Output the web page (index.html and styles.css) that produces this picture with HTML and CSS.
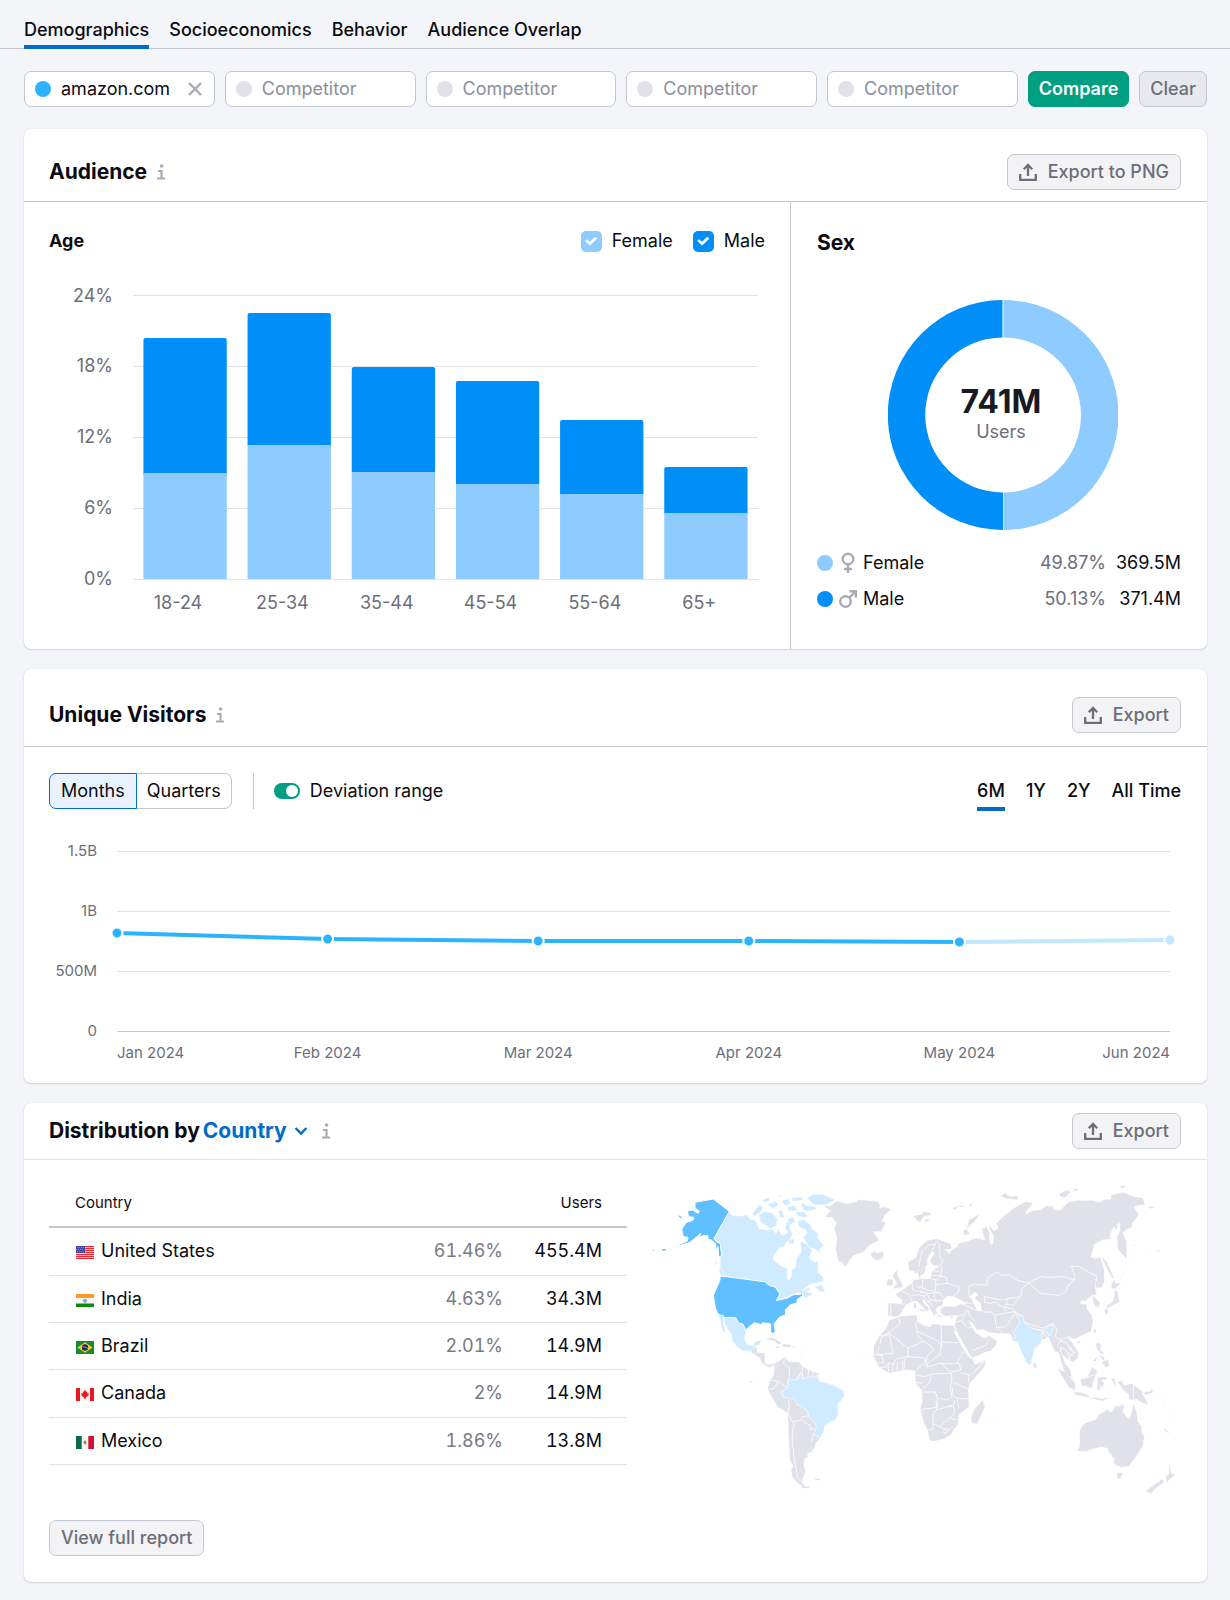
FILE: index.html
```html
<!DOCTYPE html>
<html lang="en">
<head>
<meta charset="utf-8">
<meta name="viewport" content="width=device-width, initial-scale=1">
<title>Demographics</title>
<link rel="stylesheet" href="styles.css">
</head>
<body>
<svg class="defs" width="0" height="0" aria-hidden="true">
  <symbol id="info" viewBox="0 0 8 16"><circle cx="4.600" cy="2" r="1.800"/><path d="M1 6h4.600v7.400H8V15.400H0V13.400h3.400V8H1z"/></symbol>
  <symbol id="export" viewBox="0 0 18 18"><path d="M1.200 11v5.800h15.600v-5.800M9 13V2.500M4.800 6.200 9 2 13.200 6.200" fill="none" stroke="currentColor" stroke-width="2.300"/></symbol>
</svg>
<nav class="tabs" aria-label="Sections">
  <a class="tab tab-active" href="#demographics">Demographics</a>
  <a class="tab" href="#socioeconomics">Socioeconomics</a>
  <a class="tab" href="#behavior">Behavior</a>
  <a class="tab" href="#overlap">Audience Overlap</a>
</nav>
<main class="page">
  <form class="compare">
    <div class="field"><span class="dot dot-own"></span><input type="text" aria-label="Domain" value="amazon.com"><button class="remove" type="button" aria-label="Remove"><svg width="14" height="14" viewBox="0 0 14 14"><path d="M1 1l12 12M13 1L1 13" stroke="currentColor" stroke-width="2.400"/></svg></button></div>
    <div class="field"><span class="dot"></span><input type="text" aria-label="Competitor 1" placeholder="Competitor"></div>
    <div class="field"><span class="dot"></span><input type="text" aria-label="Competitor 2" placeholder="Competitor"></div>
    <div class="field"><span class="dot"></span><input type="text" aria-label="Competitor 3" placeholder="Competitor"></div>
    <div class="field"><span class="dot"></span><input type="text" aria-label="Competitor 4" placeholder="Competitor"></div>
    <button class="btn btn-primary" type="button">Compare</button>
    <button class="btn btn-clear" type="button">Clear</button>
  </form>

  <section class="card">
    <header class="card-head">
      <h2>Audience</h2><svg class="info"><use href="#info"/></svg>
      <button class="btn btn-export" type="button"><svg width="18" height="18"><use href="#export"/></svg>Export to PNG</button>
    </header>
    <div class="audience">
      <div class="age">
        <div class="age-head">
          <h3>Age</h3>
          <label class="check"><input class="box box-female" type="checkbox" checked>Female</label>
          <label class="check"><input class="box box-male" type="checkbox" checked>Male</label>
        </div>
        <svg class="bars" role="img" aria-label="Age distribution">
          <g class="grid"><line x2="100%" y1="1" y2="1"/><line x2="100%" y1="72" y2="72"/><line x2="100%" y1="143" y2="143"/><line x2="100%" y1="214" y2="214"/><line x2="100%" y1="285" y2="285"/></g>
          <g class="axis" text-anchor="end"><text x="-20" y="8">24%</text><text x="-20" y="78">18%</text><text x="-20" y="149">12%</text><text x="-20" y="220">6%</text><text x="-20" y="291">0%</text></g>
          <g class="male"><rect x="1.67%" y="44" width="13.33%" height="138" rx="2"/><rect x="18.33%" y="19" width="13.33%" height="134" rx="2"/><rect x="35%" y="73" width="13.33%" height="107" rx="2"/><rect x="51.67%" y="87" width="13.33%" height="105" rx="2"/><rect x="68.33%" y="126" width="13.33%" height="76" rx="2"/><rect x="85%" y="173" width="13.33%" height="48" rx="2"/></g>
          <g class="female"><rect x="1.67%" y="179" width="13.33%" height="106"/><rect x="18.33%" y="151" width="13.33%" height="134"/><rect x="35%" y="178" width="13.33%" height="107"/><rect x="51.67%" y="190" width="13.33%" height="95"/><rect x="68.33%" y="200" width="13.33%" height="85"/><rect x="85%" y="219" width="13.33%" height="66"/></g>
          <g class="axis" text-anchor="middle"><text x="7.2%" y="315">18-24</text><text x="23.9%" y="315">25-34</text><text x="40.6%" y="315">35-44</text><text x="57.2%" y="315">45-54</text><text x="73.9%" y="315">55-64</text><text x="90.6%" y="315">65+</text></g>
        </svg>
      </div>
      <div class="sex">
        <h3 class="wide">Sex</h3>
        <svg class="donut" viewBox="0 0 230 230" role="img" aria-label="Users by sex">
          <path class="female" d="M115.500 0A115 115 0 0 1 115.500 230V192.500A77.500 77.500 0 0 0 115.500 37.500Z"/>
          <path class="male" d="M114.500 0A115 115 0 0 0 115 230V192.500A77.500 77.500 0 0 1 114.500 37.500Z"/>
          <text class="total" x="113" y="113">741M</text>
          <text class="axis" x="113" y="138" text-anchor="middle">Users</text>
        </svg>
        <ul class="legend">
          <li><span class="dot dot-female"></span><svg class="sign" viewBox="0 0 18 22"><g fill="none" stroke="currentColor" stroke-width="2.400"><circle cx="9" cy="7" r="5.300"/><path d="M9 12.500V21M5 17h8"/></g></svg><span class="name">Female</span><span class="share">49.87%</span><span class="count">369.5M</span></li>
          <li><span class="dot dot-male"></span><svg class="sign" viewBox="0 0 18 22"><g fill="none" stroke="currentColor" stroke-width="2.400"><circle cx="6.500" cy="13.500" r="5.300"/><path d="M10.300 9.700L16 4M10.500 3.200H16.800V9.500"/></g></svg><span class="name">Male</span><span class="share">50.13%</span><span class="count">371.4M</span></li>
        </ul>
      </div>
    </div>
  </section>

  <section class="card">
    <header class="card-head card-head-tall">
      <h2>Unique Visitors</h2><svg class="info"><use href="#info"/></svg>
      <button class="btn btn-export" type="button"><svg width="18" height="18"><use href="#export"/></svg>Export</button>
    </header>
    <div class="controls">
      <div class="segment"><button class="seg seg-on" type="button">Months</button><button class="seg" type="button">Quarters</button></div>
      <span class="rule"></span>
      <label class="toggle"><input class="switch" type="checkbox" checked>Deviation range</label>
      <div class="ranges"><button class="range range-on" type="button">6M</button><button class="range" type="button">1Y</button><button class="range" type="button">2Y</button><button class="range" type="button">All Time</button></div>
    </div>
    <svg class="trend" role="img" aria-label="Unique visitors by month">
      <g class="grid"><line x2="100%" y1="1" y2="1"/><line x2="100%" y1="61" y2="61"/><line x2="100%" y1="121" y2="121"/><line class="base" x2="100%" y1="181" y2="181"/></g>
      <g stroke="#2bb3ff" stroke-width="4"><line x1="0" y1="83" x2="20%" y2="89"/><line x1="20%" y1="89" x2="40%" y2="91"/><line x1="40%" y1="91" x2="60%" y2="91"/><line x1="60%" y1="91" x2="80%" y2="92"/><line stroke="#bfe7ff" x1="80%" y1="92" x2="100%" y2="90"/></g>
      <g fill="#2bb3ff" stroke="#fff" stroke-width="2"><circle cx="0" cy="83" r="5.500"/><circle cx="20%" cy="89" r="5.500"/><circle cx="40%" cy="91" r="5.500"/><circle cx="60%" cy="91" r="5.500"/><circle cx="80%" cy="92" r="5.500"/><circle fill="#bfe7ff" cx="100%" cy="90" r="5.500"/></g>
      <g class="axis-small" text-anchor="end"><text x="-20" y="6">1.5B</text><text x="-20" y="66">1B</text><text x="-20" y="126">500M</text><text x="-20" y="186">0</text><text x="100%" y="208">Jun 2024</text></g>
      <g class="axis-small" text-anchor="middle"><text x="20%" y="208">Feb 2024</text><text x="40%" y="208">Mar 2024</text><text x="60%" y="208">Apr 2024</text><text x="80%" y="208">May 2024</text></g>
      <text class="axis-small" x="0" y="208">Jan 2024</text>
    </svg>
  </section>

  <section class="card">
    <header class="card-head card-head-slim">
      <h2><label for="dimension">Distribution by</label></h2>
      <div class="picker"><select id="dimension"><option>Country</option></select><svg width="14" height="10" viewBox="0 0 14 10"><path d="M1.500 2L7 7.500 12.500 2" fill="none" stroke="currentColor" stroke-width="2.400"/></svg></div>
      <svg class="info"><use href="#info"/></svg>
      <button class="btn btn-export" type="button"><svg width="18" height="18"><use href="#export"/></svg>Export</button>
    </header>
    <div class="distribution">
      <div class="countries">
        <table>
          <thead><tr><th scope="col">Country</th><th></th><th class="num" scope="col">Users</th></tr></thead>
          <tbody>
            <tr><td><svg class="flag" viewBox="0 0 18 13"><path fill="#fff" d="M0 0h18v13H0z"/><path stroke="#f3252f" stroke-width="1.200" d="M0 .6h18M0 2.600h18M0 4.600h18M0 6.600h18M0 8.600h18M0 10.600h18M0 12.500h18"/><path fill="#41479b" d="M0 0h9v7H0z"/><path stroke="#9ca0d8" stroke-dasharray="1 1" d="M1 1.500h8M0 3.500h8M1 5.500h8" stroke-width=".7"/></svg>United States</td><td class="pct">61.46%</td><td class="num">455.4M</td></tr>
            <tr><td><svg class="flag" viewBox="0 0 18 13"><path fill="#f7f7f7" d="M0 0h18v13H0z"/><path fill="#ff9a22" d="M0 0h18v4H0z"/><path fill="#098a0b" d="M0 9.500h18V13H0z"/><circle cx="9" cy="6.700" r="1.700" fill="#9bb0e0" stroke="#506bc0" stroke-width=".5"/></svg>India</td><td class="pct">4.63%</td><td class="num">34.3M</td></tr>
            <tr><td><svg class="flag" viewBox="0 0 18 13"><path fill="#168b37" d="M0 0h18v13H0z"/><path fill="#fbd116" d="M9 1.200L16.500 6.500 9 11.800 1.500 6.500z"/><circle cx="9" cy="6.500" r="3.200" fill="#26266e"/><path d="M6 5.800q3-.5 6 1.700" stroke="#c6cce8" stroke-width=".6" fill="none"/></svg>Brazil</td><td class="pct">2.01%</td><td class="num">14.9M</td></tr>
            <tr><td><svg class="flag" viewBox="0 0 18 13"><path fill="#f3f3f3" d="M0 0h18v13H0z"/><path fill="#f0141e" d="M0 0h4v13H0zM14 0h4v13h-4zM9 1.800l1.200 2 1-.4-.2 2 1.800-.6-.5 2 .7.500-3 2 .3 1H9.300v1.200h-.6v-1.200H7.700l.3-1-3-2 .7-.5-.5-2 1.800.6-.2-2 1 .4z"/></svg>Canada</td><td class="pct">2%</td><td class="num">14.9M</td></tr>
            <tr><td><svg class="flag" viewBox="0 0 18 13"><path fill="#f3f3f3" d="M0 0h18v13H0z"/><path fill="#066a45" d="M0 0h5.700v13H0z"/><path fill="#d31230" d="M12.300 0H18v13h-5.700z"/><path d="M7.500 6.500q.2-2.500 2-2 1.500 1 .7 3.500-1.500 1.300-2.700-1.500" fill="#a5814c"/></svg>Mexico</td><td class="pct">1.86%</td><td class="num">13.8M</td></tr>
          </tbody>
        </table>
        <button class="btn btn-export btn-report" type="button">View full report</button>
      </div>
      <svg class="map" viewBox="0 30 1620 960" role="img" aria-label="Users by country">
        <!-- North America -->
        <g class="top" stroke="#fff" stroke-width="3">
          <path d="M165 97L220 87 268 124 222 206 230 216 241 220 245 256 236 262 234 230 228 242 227 221 214 210 204 208 204 197 190 196 178 204 182 190 164 206 148 218 91 235 142 213 144 202 130 200 125 178 138 158 160 150 162 142 146 140 142 123 158 120 174 130 178 124 165 114Z"/>
          <path d="M246 318L374 335 388 346 406 351 420 372 410 391 440 385 460 374 482 373 482 363 488 363 488 377 472 388 470 400 452 404 436 420 437 434 418 442 402 462 406 484 398 492 392 484 392 462 368 458 366 464 344 458 330 468 318 480 308 462 296 460 288 444 252 442 234 432 226 414 220 376 240 330 240 322Z"/>
        </g>
        <g class="top"><path d="M116 136l8 4 2 6-8-4zM66 238l10-2 2 4-10 2zM38 240l5 1-2 3z"/></g>
        <g class="low" stroke="#fff" stroke-width="2">
          <path d="M268 124L274 136 300 138 322 134 330 148 346 150 358 176 380 180 396 176 408 190 414 178 428 196 444 188 434 174 440 154 450 156 450 176 458 190 452 206 436 220 434 230 420 232 402 256 400 268 420 286 442 296 442 326 448 330 454 318 454 300 466 292 470 264 482 250 484 238 480 214 500 222 516 240 508 264 524 276 534 272 534 306 550 322 550 334 516 342 498 350 486 362 508 352 512 358 500 364 512 370 520 372 500 384 490 380 488 372 476 368 460 374 410 392 420 372 406 351 388 346 374 335 252 318 240 300 240 262 246 256 241 220 222 206Z"/>
          <path d="M472 154L490 148 512 164 516 176 534 190 534 204 552 226 540 236 540 252 526 238 508 232 488 202 500 192 496 178 476 172Z"/>
          <path d="M356 136L372 124 396 128 412 146 410 168 392 176 376 166 362 158Z"/>
          <path d="M336 132L356 104 370 112 360 130 344 138ZM366 90L384 82 392 92 372 98ZM380 104L408 94 416 106 400 116ZM424 92L446 86 452 102 436 108ZM408 80L422 76 424 84ZM440 112L462 106 474 120 462 124 446 122ZM414 124L426 120 434 142 422 144ZM466 124L492 126 506 140 492 144 472 136ZM484 96L498 106 530 110 526 120 500 124 486 116ZM500 84L520 72 548 73 588 90 560 104 540 106 522 104ZM440 148L460 140 466 156 452 164ZM444 210L462 206 464 220 450 222ZM524 352L546 344 556 366 544 366ZM452 84L486 80 490 90 460 94Z"/>
          <path d="M236 290L252 306 252 322 240 314ZM226 262L232 280 226 286Z"/>
          <path d="M252 442L288 444 296 460 308 462 318 480 314 508 322 524 340 526 346 514 364 510 358 526 340 530 334 545 310 543 290 530 278 514 274 494 262 476 252 456Z"/>
          <path d="M234 434L250 436 250 460 258 492 246 480 242 456Z"/>
        </g>
        <!-- Greenland, Iceland, Central and South America -->
        <g class="land">
          <path d="M554 108L568 110 592 94 620 102 650 96 654 90 684 92 714 96 720 108 714 116 736 112 752 118 734 134 724 156 736 158 722 184 700 184 704 194 716 210 684 228 670 246 640 256 628 270 616 290 608 276 596 272 588 240 592 204 584 176 590 160 578 142 556 140 572 124Z"/>
          <path d="M692 250L704 246 712 250 728 246 730 258 724 266 710 270 696 260Z"/>
          <path d="M338 534L348 532 352 548 374 550 374 580 386 586 398 580 408 588 398 586 388 592 364 578 362 566 352 558 334 546ZM380 508L396 503 414 512 424 520 412 522 404 512ZM428 522L452 526 450 531 430 530ZM406 530l10 1-2 4zM456 530l8 1v4zM330 636l7-3-2 6z"/>
          <path d="M404 582L434 562 446 576 476 576 488 590 506 600 538 612 534 632 582 646 540 804 526 820 524 830 514 846 502 850 502 862 494 864 490 886 496 904 486 930 484 946 474 940 458 920 454 896 460 890 450 866 444 730 414 710 396 680 384 656 390 632 402 616Z"/>
          <path d="M486 938L494 950 508 950 506 954 486 953ZM524 928l14-2-2 5zM484 540l4 8M482 552l4 14"/>
        </g>
        <path class="low edge" d="M444 630L456 628 470 630 482 612 488 626 516 620 530 622 536 610 536 632 582 646 612 662 612 682 594 702 594 736 584 752 570 756 554 768 552 784 542 804 520 792 530 772 524 756 506 742 504 726 490 712 470 704 464 686 448 686 428 680 424 666 442 654 446 640Z"/>
        <g class="border">
          <path d="M434 566L430 580 448 592 448 620 442 640M484 606L474 620 470 630M488 590L486 606 490 626M506 600L504 620M520 604L518 620M390 630L414 634 440 652M414 634L402 656 388 658M444 688L448 706 444 730 458 756 484 750 488 740 504 738M462 756L456 800 462 860 472 920 486 936M484 752L510 766 512 780 524 774M520 792L514 816"/>
        </g>
        <!-- Europe and Asia -->
        <g transform="translate(600 0)">
          <path class="land" d="M290 207L332 222 334 236 310 238 324 246 324 254 340 236 352 232 354 222 384 214 408 204 436 212 426 178 440 170 448 190 446 206 452 224 460 222 462 198 450 178 448 166 462 184 476 176 470 160 490 140 520 116 558 96 578 100 570 110 558 124 556 136 574 124 604 120 618 108 638 110 640 120 662 122 666 116 684 98 716 92 756 92 780 98 790 90 814 88 814 76 850 68 884 82 908 84 914 104 890 106 880 110 896 134 876 160 874 172 858 178 848 190 858 214 860 266 834 238 832 200 842 180 840 158 832 162 830 178 820 168 808 198 812 206 790 208 762 222 752 262 764 266 780 262 792 300 792 336 784 352 770 352 766 364 768 374 754 374 778 396 778 410 766 408 756 376 736 392 724 390 720 402 738 404 740 416 754 434 758 456 752 484 720 498 706 506 682 502 694 516 714 546 714 562 700 576 684 568 676 560 666 556 674 580 690 600 694 622 676 612 664 572 656 546 646 544 634 520 626 500 614 506 604 508 602 520 584 536 572 584 562 582 540 534 534 514 518 514 516 498 508 490 482 490 446 486 428 478 412 480 398 458 384 450 404 486 424 500 438 506 446 498 470 512 468 524 452 542 440 544 396 563 376 530 356 494 344 468 352 436 334 436 316 438 304 430 302 416 314 410 346 410 366 402 382 402 360 388 340 378 322 378 308 392 308 406 294 410 286 420 292 430 282 436 270 414 256 392 246 386 250 400 264 412 266 420 258 424 254 416 230 392 212 396 200 402 186 420 182 432 166 440 144 436 146 400 184 402 188 390 168 374 184 362 200 352 216 340 222 330 236 330 240 326 232 304 226 312 222 302 208 300 206 276 230 262 238 234 262 212Z"/>
          <g class="sea"><path d="M276 244L262 264 262 284 256 290 256 306 240 318 242 328 272 326 276 302 300 288 278 286 270 272 284 250ZM310 390L322 380 328 390 340 384 346 388 362 400 340 404 312 402ZM390 378L406 366 414 374 404 384 422 400 426 424 412 422 404 408Z"/></g>
          <g class="land"><path d="M158 318L170 302 174 320 188 344 186 352 160 355 172 340ZM140 340L146 328 158 330 158 344 142 347ZM236 418l14 0 2 6zM222 400l6 2v12h-6zM290 436l14 2v3zM330 440l10 0-4 4z"/>
          <path d="M222 138L246 134 250 126 272 128 270 136 252 136 240 156 230 150ZM254 150l12-3-2 6-8 1zM338 114l16-6-10 12zM358 108h12v3h-12zM388 104l7-3-3 8zM382 174L388 150 418 134 402 156 388 168ZM372 180L380 178 388 192 372 194ZM484 78L496 70 510 80 530 78 534 88 514 86 496 84ZM658 72L682 60 692 66 676 82 664 80ZM698 60l16-4-4 7zM840 50l12-4 4 4-10 5zM926 110l14 1-4 5zM876 224l12 2M916 235l6 2M952 240l5 3-4 2z"/>
          <path d="M784 260L800 276 822 324 816 322 802 296ZM814 344L822 330 826 342 842 340 824 356 816 354ZM824 360L832 366 838 396 812 408 804 414 800 408 818 396 824 380ZM794 420L802 416 804 428 796 434ZM856 270l2 18M850 312l-12 20M762 478l6 2-4 12zM710 516l10-2-2 6z"/></g>
          <path class="low edge" d="M530 438L548 436 552 456 574 474 606 482 620 476 624 466 640 460 640 470 632 496 626 498 622 486 606 486 604 514 584 534 572 584 562 582 538 534 534 514 518 514 516 508 528 500 520 490 530 472 540 456Z"/>
          <g class="border">
            <path d="M236 290L246 244 266 226 286 222 276 244M286 214L298 222 300 260 308 272 300 288M306 290L302 318 318 322 324 340 356 350 356 366 340 378M276 302L300 304M274 316L302 318 292 330 272 326M248 330L246 354 270 362 286 360 288 340 284 330M286 344L324 340M216 334L218 360 240 366 250 360M246 354L230 350M184 362L210 376 214 394M216 376L236 374 250 378 262 372 286 366 302 370 310 386M240 366L262 368M262 372L270 390 264 398M270 390L308 392M286 366L282 378 290 400M250 378L258 390 272 400 280 410M152 404L152 434M184 402L200 402M310 400L300 414M362 400L390 412 412 422M372 396L396 402M380 420L376 432 350 440M346 456L366 452 376 434M366 452L382 474 404 472M384 420L390 440 404 452"/>
            <path d="M388 384L386 350 402 342 440 346 444 322 470 306 488 316 508 314 534 332 566 338 546 356 542 380 504 386 486 390 432 380 434 394M432 396L450 400 468 396 490 414 498 424M504 386L498 402 518 406 540 382M498 402L494 412 520 416 530 436M428 426L454 426 464 436 470 474 484 488M464 436L494 430 530 424M470 474L498 470 512 448 528 426M518 424L548 438"/>
            <path d="M566 338L602 320 624 322 668 320 704 330 688 342 676 366 656 376 600 370 580 352ZM702 330L704 316 694 288 718 290 742 304 770 318 766 348 768 362M552 456L574 464 606 474 640 464 650 478 646 500 662 510 684 500 700 506M574 474L606 482M606 488L624 504M652 530L660 512 682 520 690 540 706 548M666 556L660 532 678 540 688 552 700 556M396 542L438 526 446 508"/>
          </g>
        </g>
        <!-- Africa, South-East Asia and Oceania -->
        <g transform="translate(600 480)">
          <path class="land" d="M148 -28L176 -40 230 -44 232 -24 250 -14 270 -8 280 -18 300 -14 340 -12 346 4 340 4 366 50 388 84 396 86 404 104 436 92 432 112 410 136 388 160 384 178 386 230 356 254 352 286 340 298 336 310 312 326 276 334 268 326 264 300 252 276 242 236 248 212 246 180 228 160 226 122 206 118 180 122 146 128 118 110 102 80 102 48 118 18 140 -6Z"/>
          <path class="land" d="M428 212L434 232 410 282 396 278 394 262 402 240ZM580 98L588 102 588 114 582 114ZM654 118L670 124 700 152 706 168 704 180 688 172ZM702 186L722 188 746 196 746 202 708 194ZM722 148L744 140 758 112 772 124 762 146 754 174 740 168 726 166ZM774 144L800 142 798 148 782 150 792 160 788 168 794 178 782 164 778 182 772 178ZM768 42L776 38 782 44 780 60 792 72 782 70 772 58ZM786 96L804 90 808 106 798 112ZM780 74l10 6 4 12-8-4zM760 94l10-12-2 10zM816 146l6 0 6 22-8-12zM750 204l22 0 20 6-16 0zM780 208l24-4-20 8z"/>
          <path class="land" d="M834 156L846 154 852 168 872 162 880 166 904 182 908 194 924 222 908 218 890 206 872 210 866 192 848 176ZM910 188l22-4 2-10 4 12-20 8zM956 196l6 6M966 208l8 10M974 226l4 6M996 254l4 8M974 296l10 10 2 4-12-10zM404 208l4 6M446 264l6 2M458 262l5-2M442 188l6 0M70 68l8 4M66 76l4 4"/>
          <path class="land" d="M720 300L732 282 770 268 776 256 804 238 808 246 818 246 826 230 850 226 852 232 846 246 866 268 872 262 880 224 890 250 892 274 904 288 904 308 912 320 908 346 882 388 866 408 846 412 824 402 822 384 814 378 820 372 808 370 804 354 784 350 756 356 740 364 714 362 720 346ZM832 430L848 430 840 446 832 444ZM988 402L992 430 1004 434 980 456 978 440 988 430ZM966 448L972 456 944 476 934 490 918 484Z"/>
          <g class="border">
            <path d="M176 -40L180 -20 146 10 118 18M146 4L150 12 204 54 252 34 246 30 230 10 232 -2 226 -18 230 -24M120 42L124 20 146 14M158 70L110 74 118 50M146 4L160 70M232 4L296 34 304 48 304 -16M304 36L354 38M204 54L204 80 170 86 158 104 144 98M102 74L126 76 130 96 116 100M252 34L276 50 280 60 262 78 256 110M204 80L254 84 256 96 230 120M160 98L158 122M172 96L170 122M188 92L188 122M196 86L192 120M144 98L146 126M128 96L142 110 118 114"/>
            <path d="M304 48L300 74 262 100 262 112 300 100 346 102 356 92 372 60M346 102L358 100 362 120 332 126 302 98M372 66L404 92 430 98 394 134M358 128L388 134 384 156M340 156L384 178M274 132L334 130 336 150 330 176 336 200 320 210 292 204 286 186 250 186M230 136L256 140 274 132 270 156 250 176M228 156L246 160M336 170L340 200 356 206 384 206M292 204L292 232 244 238M288 212L290 240 322 230 344 222 342 210M290 240L280 250 278 300 266 300M280 282L300 290 328 264 344 250 342 230 322 230M328 264L350 270M300 290L320 302 340 290M310 300l8-6 8 4-4 8-8 4-4-6M352 206L356 234"/>
            <path d="M880 164v44M728 148L752 138 768 134M662 72L684 90 700 66 690 50M684 70L690 90"/>
          </g>
        </g>
      </svg>
    </div>
  </section>
</main>
</body>
</html>
```
FILE: styles.css
```css
* { box-sizing: border-box; }
body {
  margin: 0;
  background: #f4f5f9;
  color: #0b0c12;
  font: 18px/24px Inter, "Liberation Sans", sans-serif;
}
h2, h3, ul { margin: 0; padding: 0; font-weight: 700; }
h2 { font-size: 21px; line-height: 28px; }
h3 { font-size: 18px; line-height: 24px; }
h3.wide { font-size: 21px; }
button, input, select { font: inherit; color: inherit; }
button { cursor: pointer; }
.defs { display: block; }

.tabs {
  display: flex;
  gap: 20px;
  height: 49px;
  padding: 0 24px;
  border-bottom: 1px solid #c4c7cf;
}
.tab {
  height: 49px;
  padding-top: 18px;
  color: inherit;
  font-weight: 500;
  text-decoration: none;
}
.tab-active { border-bottom: 4px solid #006dca; }

.page {
  display: flex;
  flex-direction: column;
  gap: 20px;
  padding: 22px 23px 18px 24px;
}
.compare { display: flex; gap: 10px; margin-bottom: 2px; }
.field {
  display: flex;
  flex: 1 1 0;
  align-items: center;
  gap: 10px;
  min-width: 0;
  height: 36px;
  padding: 0 11px 0 10px;
  background: #fff;
  border: 1px solid #c4c7cf;
  border-radius: 7px;
}
.field input {
  flex: 1;
  min-width: 0;
  padding: 0;
  border: 0;
  outline: 0;
  background: none;
}
.field input::placeholder { color: #8a8e9b; opacity: 1; }
.dot { flex: none; width: 16px; height: 16px; border-radius: 50%; background: #e0e1e9; }
.dot-own { background: #2bb3ff; }
.dot-female { background: #8ecbff; }
.dot-male { background: #008ff8; }
.remove { display: flex; padding: 0 1px; border: 0; background: none; color: #a9abb6; }

.btn {
  height: 36px;
  padding: 0 11px;
  border: 1px solid #c4c7cf;
  border-radius: 7px;
  background: #f3f3f6;
  color: #6c6e79;
  font-weight: 500;
  line-height: 24px;
  white-space: nowrap;
}
.btn-primary { padding: 0 10px; border-color: #009f81; background: #009f81; color: #fff; font-weight: 600; }
.btn-clear { padding: 0 10px; background: #e8e9ee; }
.btn-export { display: flex; align-items: center; gap: 11px; margin-left: auto; }

.card {
  background: #fff;
  border-radius: 7px;
  box-shadow: 0 0 1px rgba(25, 27, 35, .16), 0 1px 2px rgba(25, 27, 35, .14);
}
.card-head {
  display: flex;
  align-items: center;
  height: 73px;
  padding: 14px 26px 0 25px;
  border-bottom: 1px solid #c4c7cf;
}
.card-head-tall { height: 78px; }
.card-head-slim { height: 57px; padding-top: 0; border-color: #e0e1e9; }
.info { width: 8px; height: 16px; margin-left: 10px; fill: #a9abb6; }
.picker + .info { margin-left: 14px; }

.audience { display: grid; grid-template-columns: minmax(0, 1fr) 416px; }
.age { padding: 27px 25px 30px 25px; border-right: 1px solid #c4c7cf; }
.age-head { display: flex; align-items: center; gap: 20px; }
.age-head h3 { margin-right: auto; }
.check { display: flex; align-items: center; gap: 10px; }
.box {
  display: grid;
  place-items: center;
  width: 21px;
  height: 21px;
  margin: 0;
  border-radius: 5px;
  appearance: none;
}
.box::after {
  content: "";
  width: 12px;
  height: 9px;
  background: #fff;
  clip-path: polygon(0 50%, 15% 30%, 39% 58%, 84% 4%, 100% 24%, 40% 100%);
}
.box-female { background: #8ecbff; }
.box-male { background: #008ff8; }
.bars { display: block; width: calc(100% - 91px); height: 325px; margin: 41px 7px 0 84px; overflow: visible; }
.grid { stroke: #e0e1e9; stroke-width: 1; shape-rendering: crispEdges; }
.grid .base { stroke: #c4c7cf; }
.female { fill: #8ecbff; }
.male { fill: #008ff8; }
.axis { fill: #6c6e79; font-size: 18px; }
.axis-small { fill: #6c6e79; font-size: 15px; }

.sex { display: flex; flex-direction: column; padding: 29px 26px 24px 26px; }
.donut { align-self: center; width: 230px; height: 230px; margin: 45px 0 21px 8px; }
.total { fill: #171a22; font-size: 32px; font-weight: 700; text-anchor: middle; }
.legend { display: grid; gap: 12px; font-weight: 400; list-style: none; }
.legend li { display: flex; align-items: center; }
.sign { width: 18px; height: 22px; margin: 0 6px; color: #a9abb6; }
.name { flex: 1; }
.share { color: #6c6e79; }
.count { width: 75px; text-align: right; }

.controls { display: flex; align-items: center; height: 36px; margin: 26px 26px 0 25px; }
.segment { display: flex; }
.seg {
  height: 36px;
  padding: 0 10px;
  border: 1px solid #c4c7cf;
  border-left: 0;
  border-radius: 0 7px 7px 0;
  background: #fff;
}
.seg-on { padding: 0 11px; border: 1px solid #006dca; border-radius: 7px 0 0 7px; background: #e9f3ff; }
.rule { width: 1px; height: 36px; margin: 0 20px 0 21px; background: #c4c7cf; }
.toggle { display: flex; align-items: center; gap: 10px; }
.switch {
  display: flex;
  align-items: center;
  justify-content: flex-end;
  width: 26px;
  height: 16px;
  margin: 0;
  padding: 2px;
  border-radius: 8px;
  background: #009f81;
  appearance: none;
}
.switch::after { content: ""; width: 12px; height: 12px; border-radius: 50%; background: #fff; }
.ranges { display: flex; gap: 21px; margin-left: auto; }
.range {
  height: 40px;
  padding: 0;
  border: solid transparent;
  border-width: 4px 0;
  background: none;
  font-weight: 500;
}
.range-on { border-bottom-color: #006dca; }
.trend { display: block; width: calc(100% - 130px); height: 212px; margin: 41px 37px 21px 93px; overflow: visible; }

.picker { display: flex; align-items: center; gap: 7px; margin-left: 3px; color: #006dca; }
.picker select {
  padding: 0;
  border: 0;
  background: none;
  font-size: 21px;
  font-weight: 700;
  line-height: 28px;
  appearance: none;
}
.distribution {
  display: grid;
  grid-template-columns: minmax(0, 578fr) minmax(0, 540fr);
  gap: 13px;
  padding: 20px 27px 26px 25px;
}
table { width: 100%; height: 285px; border-collapse: collapse; }
thead tr { height: 47px; }
th { padding: 0 26px; border-bottom: 2px solid #c4c7cf; font-size: 15px; font-weight: 400; text-align: left; }
td { padding: 0; border-bottom: 1px solid #e0e1e9; font-variant-numeric: tabular-nums; }
td:first-child { padding-left: 27px; }
td.pct { color: #777a85; text-align: right; }
td.num { width: 124px; padding-right: 25px; text-align: right; }
th.num { padding-right: 25px; text-align: right; }
.flag { width: 18px; height: 13px; margin-right: 7px; vertical-align: -2px; }
.btn-report { margin: 55px 0 0; }
.map { width: 100%; height: auto; }
.land { fill: #e0e1e9; stroke: #e0e1e9; stroke-width: 1; stroke-linejoin: round; }
.top { fill: #60c0ff; }
.low { fill: #d0eaff; }
.edge { stroke: #fff; stroke-width: 2; }
.sea { fill: #fff; }
.border { fill: none; stroke: #fafafc; stroke-width: 3; stroke-linejoin: round; }
```
